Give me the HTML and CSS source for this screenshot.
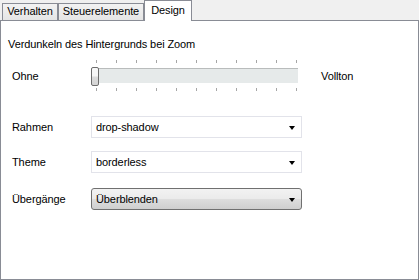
FILE: index.html
```html
<!DOCTYPE html>
<html lang="de">
<head>
    <meta charset="UTF-8">
    <title>Design</title>
    <link rel="stylesheet" href="styles.css">
</head>
<body>

<div class="tabs">
    <div class="tab tab-verhalten">Verhalten</div>
    <div class="tab tab-steuer">Steuerelemente</div>
    <div class="tab tab-design active">Design</div>
</div>

<div class="panel">
    <div class="heading">Verdunkeln des Hintergrunds bei Zoom</div>

    <!-- Slider row -->
    <div class="slider-row">
        <div class="label">Ohne</div>
        <div class="slider">
            <div class="ticks">
                <span></span><span></span><span></span><span></span><span></span><span></span>
                <span></span><span></span><span></span><span></span><span></span>
            </div>
            <div class="track-wrap">
                <div class="track"></div>
                <div class="thumb"></div>
            </div>
            <div class="ticks bottom">
                <span></span><span></span><span></span><span></span><span></span><span></span>
                <span></span><span></span><span></span><span></span><span></span>
            </div>
        </div>
        <div class="slider-end">Vollton</div>
    </div>

    <!-- Combo rows -->
    <div class="combo-row first">
        <div class="label">Rahmen</div>
        <div class="combo">
            <span class="combo-text">drop-shadow</span>
            <span class="arrow"></span>
        </div>
    </div>

    <div class="combo-row second">
        <div class="label">Theme</div>
        <div class="combo">
            <span class="combo-text">borderless</span>
            <span class="arrow"></span>
        </div>
    </div>

    <div class="combo-row third">
        <div class="label">Übergänge</div>
        <div class="combo button-combo">
            <span class="combo-text">Überblenden</span>
            <span class="arrow"></span>
        </div>
    </div>
</div>

</body>
</html>
```

FILE: styles.css
```css
body {
    margin: 0;
    background-color: #f0f0f0;
    font-family: 'Liberation Sans', Arial, sans-serif;
    font-size: 11px;
    line-height: 13px;
    letter-spacing: -0.1px;
    color: #000;
    width: 419px;
    height: 280px;
    overflow: hidden;
}

/* Tab strip */
.tabs {
    display: flex;
    align-items: flex-end;
    height: 20px;
    padding-left: 2px;
}

.tab {
    box-sizing: border-box;
    height: 17px;
    border: 1px solid #898c95;
    border-bottom: none;
    background: linear-gradient(#f2f2f2, #e5e5e5);
    text-align: center;
    padding-top: 1px;
    color: #000;
}

.tab-verhalten {
    width: 56px;
}

.tab-steuer {
    width: 86px;
}

.tab-design {
    width: 48px;
}

.tab.active {
    position: relative;
    z-index: 1;
    height: 21px;
    margin-bottom: -1px;
    background: #fff;
    padding-top: 3px;
}

/* Panel */
.panel {
    box-sizing: border-box;
    height: 260px;
    border: 1px solid #898c95;
    background-color: #fff;
    padding: 17px 0 0 11px;
}

.heading {
    margin-left: -4px;
}

.label {
    width: 79px;
    flex-shrink: 0;
}

.slider-row {
    display: flex;
    align-items: center;
    margin-top: 7px;
}

.slider-row .label {
    padding-top: 3px;
}

.slider {
    width: 207px;
    display: flex;
    flex-direction: column;
}

.ticks {
    display: flex;
    justify-content: space-between;
    width: 201px;
    margin-left: 5px;
    margin-top: 2px;
    height: 3px;
}

.ticks span {
    width: 1px;
    height: 3px;
    background-color: #a6a6a6;
}

.track-wrap {
    position: relative;
    height: 19px;
    margin-top: 4px;
}

.track {
    position: absolute;
    left: 1px;
    right: 0;
    top: 1px;
    height: 15px;
    box-sizing: border-box;
    background-color: #e6eaea;
    border-top: 1px solid #b9bcbc;
}

.thumb {
    position: absolute;
    left: 0;
    top: 0;
    width: 8px;
    height: 19px;
    box-sizing: border-box;
    border: 1px solid #6d6d6d;
    border-radius: 2px;
    background: linear-gradient(#f7f7f7, #f7f7f7 45%, #dcdcdc 55%, #d4d4d4);
}

.slider-end {
    margin-left: 23px;
    padding-top: 3px;
}

/* Combo boxes */
.combo-row {
    display: flex;
    align-items: center;
}

.combo-row.first {
    margin-top: 25px;
}

.combo-row.second {
    margin-top: 13px;
}

.combo-row.third {
    margin-top: 15px;
}

.combo {
    box-sizing: border-box;
    width: 211px;
    height: 22px;
    border: 1px solid #e2e3ea;
    background-color: #fff;
    display: flex;
    align-items: center;
    justify-content: space-between;
    padding: 0 6px 0 4px;
}

.button-combo {
    border: 1px solid #707070;
    border-radius: 3px;
    background: linear-gradient(#f2f2f2, #ebebeb 48%, #dddddd 52%, #cfcfcf);
}

.arrow {
    width: 0;
    height: 0;
    border-left: 3.5px solid transparent;
    border-right: 3.5px solid transparent;
    border-top: 4px solid #000;
    margin-top: 1px;
}
```
